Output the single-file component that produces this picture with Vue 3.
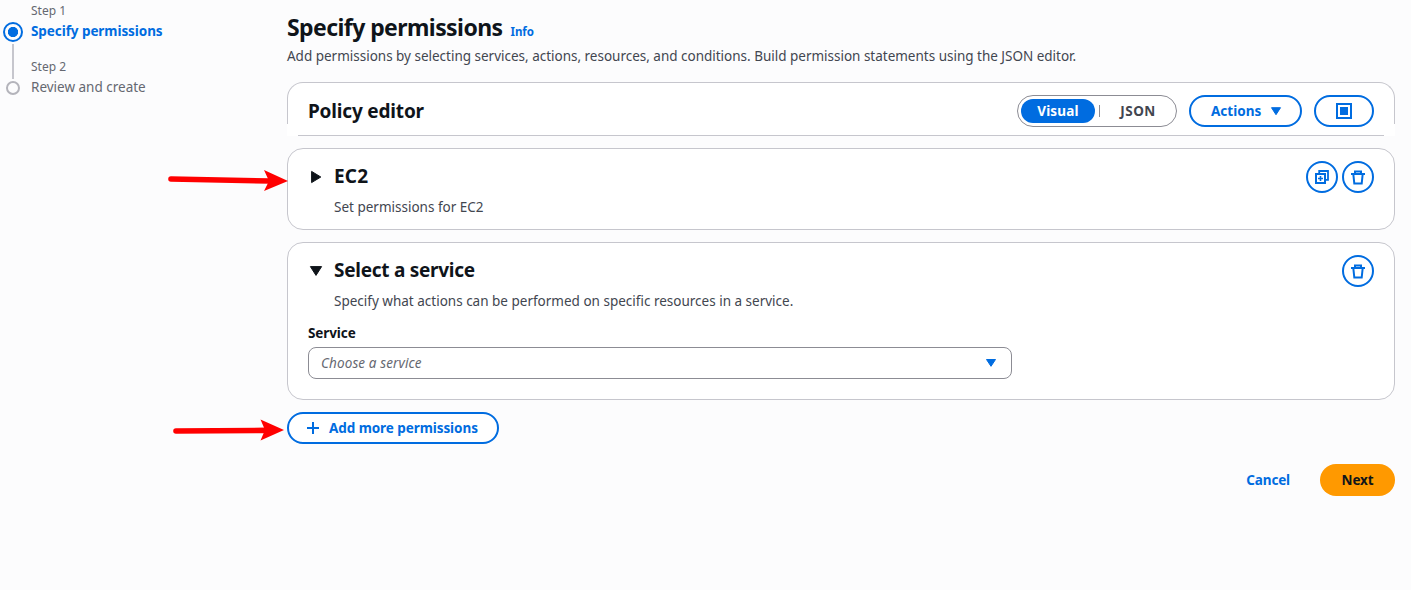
<script setup>
const steps = [
  { label: 'Step 1', title: 'Specify permissions', active: true },
  { label: 'Step 2', title: 'Review and create', active: false },
]
</script>

<template>
  <div class="page">
    <nav class="steps">
      <div v-for="s in steps" :key="s.label" class="step" :class="{ active: s.active }">
        <div class="rail">
          <span class="dot"></span>
          <span v-if="s.active" class="line"></span>
        </div>
        <div class="step-text">
          <div class="step-label">{{ s.label }}</div>
          <div class="step-title">{{ s.title }}</div>
        </div>
      </div>
    </nav>

    <main class="main">
      <header class="heading">
        <h1>Specify permissions</h1>
        <a class="info">Info</a>
      </header>
      <p class="desc">Add permissions by selecting services, actions, resources, and conditions. Build permission statements using the JSON editor.</p>

      <section class="editor">
        <h2 class="policy">Policy editor</h2>
        <div class="segment">
          <button class="seg on">Visual</button>
          <span class="divider"></span>
          <button class="seg json">JSON</button>
        </div>
        <button class="btn actions">
          <span>Actions</span>
          <svg width="12" height="10" viewBox="0 0 12 10"><path d="M1.5 1.7h9L6 8.7z" fill="currentColor" stroke="currentColor" stroke-width="1" stroke-linejoin="round" /></svg>
        </button>
        <button class="btn panel">
          <svg width="16" height="16" viewBox="0 0 16 16"><rect x="1" y="1" width="14" height="14" fill="none" stroke="currentColor" stroke-width="2" /><rect x="4" y="4" width="8" height="8" fill="currentColor" /></svg>
        </button>
      </section>

      <section class="card ec2">
        <div class="card-head">
          <svg class="caret" width="16" height="16" viewBox="0 0 16 16"><path d="M3.6 2.4v11.2L12.8 8z" fill="currentColor" stroke="currentColor" stroke-width="1" stroke-linejoin="round" /></svg>
          <h2 class="ec2-title">EC2</h2>
          <div class="tools">
            <button class="round">
              <svg width="16" height="16" viewBox="0 0 16 16" fill="none" stroke="currentColor"><rect x="2" y="5" width="9" height="9" stroke-width="2" /><path d="M5.2 4.5V2H14v8.8h-2.5" stroke-width="1.8" /><path d="M6.5 7v5M4 9.5h5" stroke-width="1.6" /></svg>
            </button>
            <button class="round">
              <svg width="16" height="16" viewBox="0 0 16 16" fill="none" stroke="currentColor" stroke-width="2"><path d="M1 5h14M5 5V2.5h6V5M3.3 5l1 9.5h7.4l1-9.5" /></svg>
            </button>
          </div>
        </div>
        <p class="sub">Set permissions for EC2</p>
      </section>

      <section class="card service">
        <div class="card-head">
          <svg class="caret" width="16" height="16" viewBox="0 0 16 16"><path d="M2.4 3.6h11.2L8 12.4z" fill="currentColor" stroke="currentColor" stroke-width="1" stroke-linejoin="round" /></svg>
          <h2 class="select-title">Select a service</h2>
          <div class="tools">
            <button class="round">
              <svg width="16" height="16" viewBox="0 0 16 16" fill="none" stroke="currentColor" stroke-width="2"><path d="M1 5h14M5 5V2.5h6V5M3.3 5l1 9.5h7.4l1-9.5" /></svg>
            </button>
          </div>
        </div>
        <p class="sub">Specify what actions can be performed on specific resources in a service.</p>
        <div class="label">Service</div>
        <div class="select">
          <span>Choose a service</span>
          <svg width="12" height="10" viewBox="0 0 12 10"><path d="M1.5 1.5h9L6 8.3z" fill="currentColor" stroke="currentColor" stroke-width="1" stroke-linejoin="round" /></svg>
        </div>
      </section>

      <button class="btn add">
        <svg width="16" height="16" viewBox="0 0 16 16"><path d="M8 2v12M2 8h12" stroke="currentColor" stroke-width="2" /></svg>
        <span>Add more permissions</span>
      </button>

      <footer class="footer">
        <button class="cancel">Cancel</button>
        <button class="next">Next</button>
      </footer>
    </main>

    <svg class="arrows" width="130" height="280" viewBox="165 165 130 280">
      <path d="M171 179L270 181" stroke="#f00" stroke-width="5.6" stroke-linecap="round" />
      <path d="M264 170L288 181L264 191L269 181z" fill="#f00" />
      <path d="M176 431L266 430.4" stroke="#f00" stroke-width="5.6" stroke-linecap="round" />
      <path d="M260.5 419.5L284 430L260.5 440.5L265 430z" fill="#f00" />
    </svg>
  </div>
</template>

<style>
body {
  background: #fcfcfd;
}
</style>

<style scoped>
.page {
  position: relative;
  display: flex;
  box-sizing: border-box;
  width: 1411px;
  height: 590px;
  overflow: hidden;
  background: #fcfcfd;
  color: #0f141a;
  font: 13.5px/20px "Noto Sans", "Open Sans", sans-serif;
}
h1, h2, p {
  margin: 0;
  font-weight: 700;
}
button {
  box-sizing: border-box;
  display: flex;
  align-items: center;
  margin: 0;
  padding: 0;
  border: 0;
  background: none;
  font: inherit;
  font-weight: 700;
  color: #006ce0;
}
svg {
  display: block;
  flex: none;
}
.steps {
  width: 287px;
  flex: none;
  padding-top: 3px;
}
.step {
  display: flex;
  height: 56px;
  color: #656871;
}
.rail {
  width: 26px;
  margin-right: 5px;
  display: flex;
  flex-direction: column;
  align-items: center;
}
.dot {
  box-sizing: border-box;
  width: 14px;
  height: 14px;
  margin-top: 22px;
  border: 2px solid #b4b4bb;
  border-radius: 50%;
  flex: none;
}
.active .dot {
  width: 20px;
  height: 20px;
  margin-top: 19px;
  border-color: #006ce0;
  background: radial-gradient(circle, #006ce0 4.8px, transparent 5.4px);
}
.line {
  width: 2px;
  height: 35px;
  margin-top: 2px;
  background: #c6c6cd;
  flex: none;
}
.step-label {
  font-size: 12px;
  line-height: 16px;
}
.step-title {
  margin-top: 2px;
}
.active .step-title {
  color: #006ce0;
  font-weight: 700;
  letter-spacing: -0.07px;
}
.main {
  width: 1108px;
  padding-top: 12px;
}
.heading {
  display: flex;
  align-items: baseline;
  gap: 8px;
  height: 30px;
}
h1 {
  font-size: 23px;
  line-height: 30px;
  letter-spacing: -0.57px;
}
.info {
  font-size: 11.5px;
  font-weight: 700;
  color: #006ce0;
  letter-spacing: -0.1px;
}
.desc {
  margin-top: 4px;
  height: 20px;
  font-weight: 400;
  color: #424650;
  white-space: nowrap;
  letter-spacing: -0.01px;
}
h2 {
  font-size: 19px;
  line-height: 24px;
}
.policy {
  letter-spacing: -0.18px;
  margin: -1px auto 0 0;
}
.editor {
  position: relative;
  display: flex;
  align-items: center;
  box-sizing: border-box;
  height: 54px;
  margin-top: 16px;
  padding: 4px 21px 0;
  background: #fff;
  border-radius: 16px 16px 0 0;
}
.editor::before {
  content: "";
  position: absolute;
  inset: 0 0 12px;
  border: 1px solid #c6c6cd;
  border-bottom: 0;
  border-radius: 16px 16px 0 0;
  pointer-events: none;
}
.editor::after {
  content: "";
  position: absolute;
  left: 11px;
  right: 11px;
  bottom: 0;
  height: 1px;
  background: #c6c6cd;
}
.segment {
  box-sizing: border-box;
  display: flex;
  align-items: center;
  width: 160px;
  height: 32px;
  padding: 0 3px;
  border: 1px solid #8c8c94;
  border-radius: 16px;
}
.seg {
  justify-content: center;
  height: 24px;
  border-radius: 12px;
}
.on {
  width: 74px;
  background: #006ce0;
  color: #fff;
  letter-spacing: 0.2px;
}
.divider {
  width: 1px;
  height: 12px;
  margin-left: 4px;
  background: #8c8c94;
}
.json {
  flex: 1;
  padding-left: 3px;
  color: #424650;
  letter-spacing: 0.5px;
}
.btn {
  height: 32px;
  border: 2px solid #006ce0;
  border-radius: 16px;
  background: #fff;
}
.actions {
  width: 113px;
  margin-left: 12px;
  padding: 0 18px 0 20px;
  justify-content: space-between;
}
.panel {
  width: 60px;
  margin-left: 12px;
  justify-content: center;
}
.card {
  box-sizing: border-box;
  margin-top: 12px;
  padding: 12px 20px 0;
  background: #fff;
  border: 1px solid #c6c6cd;
  border-radius: 16px;
}
.ec2 {
  height: 82px;
}
.service {
  height: 158px;
}
.card-head {
  display: flex;
  height: 32px;
}
.caret {
  margin: 8px 10px 0 0;
}
.card-head h2 {
  margin-top: 3px;
}
.ec2-title {
  letter-spacing: 0.2px;
}
.select-title {
  letter-spacing: -0.27px;
}
.tools {
  display: flex;
  gap: 4px;
  margin-left: auto;
}
.round {
  width: 32px;
  height: 32px;
  justify-content: center;
  border: 2px solid #006ce0;
  border-radius: 50%;
}
.sub {
  margin: 4px 0 0 26px;
  font-weight: 400;
  color: #424650;
}
.label {
  margin-top: 12px;
  font-weight: 700;
  letter-spacing: -0.1px;
}
.select {
  box-sizing: border-box;
  display: flex;
  align-items: center;
  justify-content: space-between;
  width: 704px;
  height: 32px;
  margin-top: 4px;
  padding: 0 14px 0 12px;
  border: 1px solid #8c8c94;
  border-radius: 8px;
  font-style: italic;
  letter-spacing: 0.12px;
  color: #656871;
}
.select svg {
  color: #006ce0;
}
.add {
  width: 212px;
  margin-top: 12px;
  padding-left: 16px;
  gap: 8px;
  letter-spacing: -0.07px;
}
.footer {
  display: flex;
  justify-content: flex-end;
  align-items: center;
  gap: 30px;
  margin-top: 20px;
}
.cancel {
  letter-spacing: -0.15px;
}
.next {
  justify-content: center;
  width: 75px;
  height: 32px;
  border-radius: 16px;
  background: #ff9900;
  color: #0f141a;
  letter-spacing: -0.15px;
}
.arrows {
  position: absolute;
  left: 165px;
  top: 165px;
}
</style>
